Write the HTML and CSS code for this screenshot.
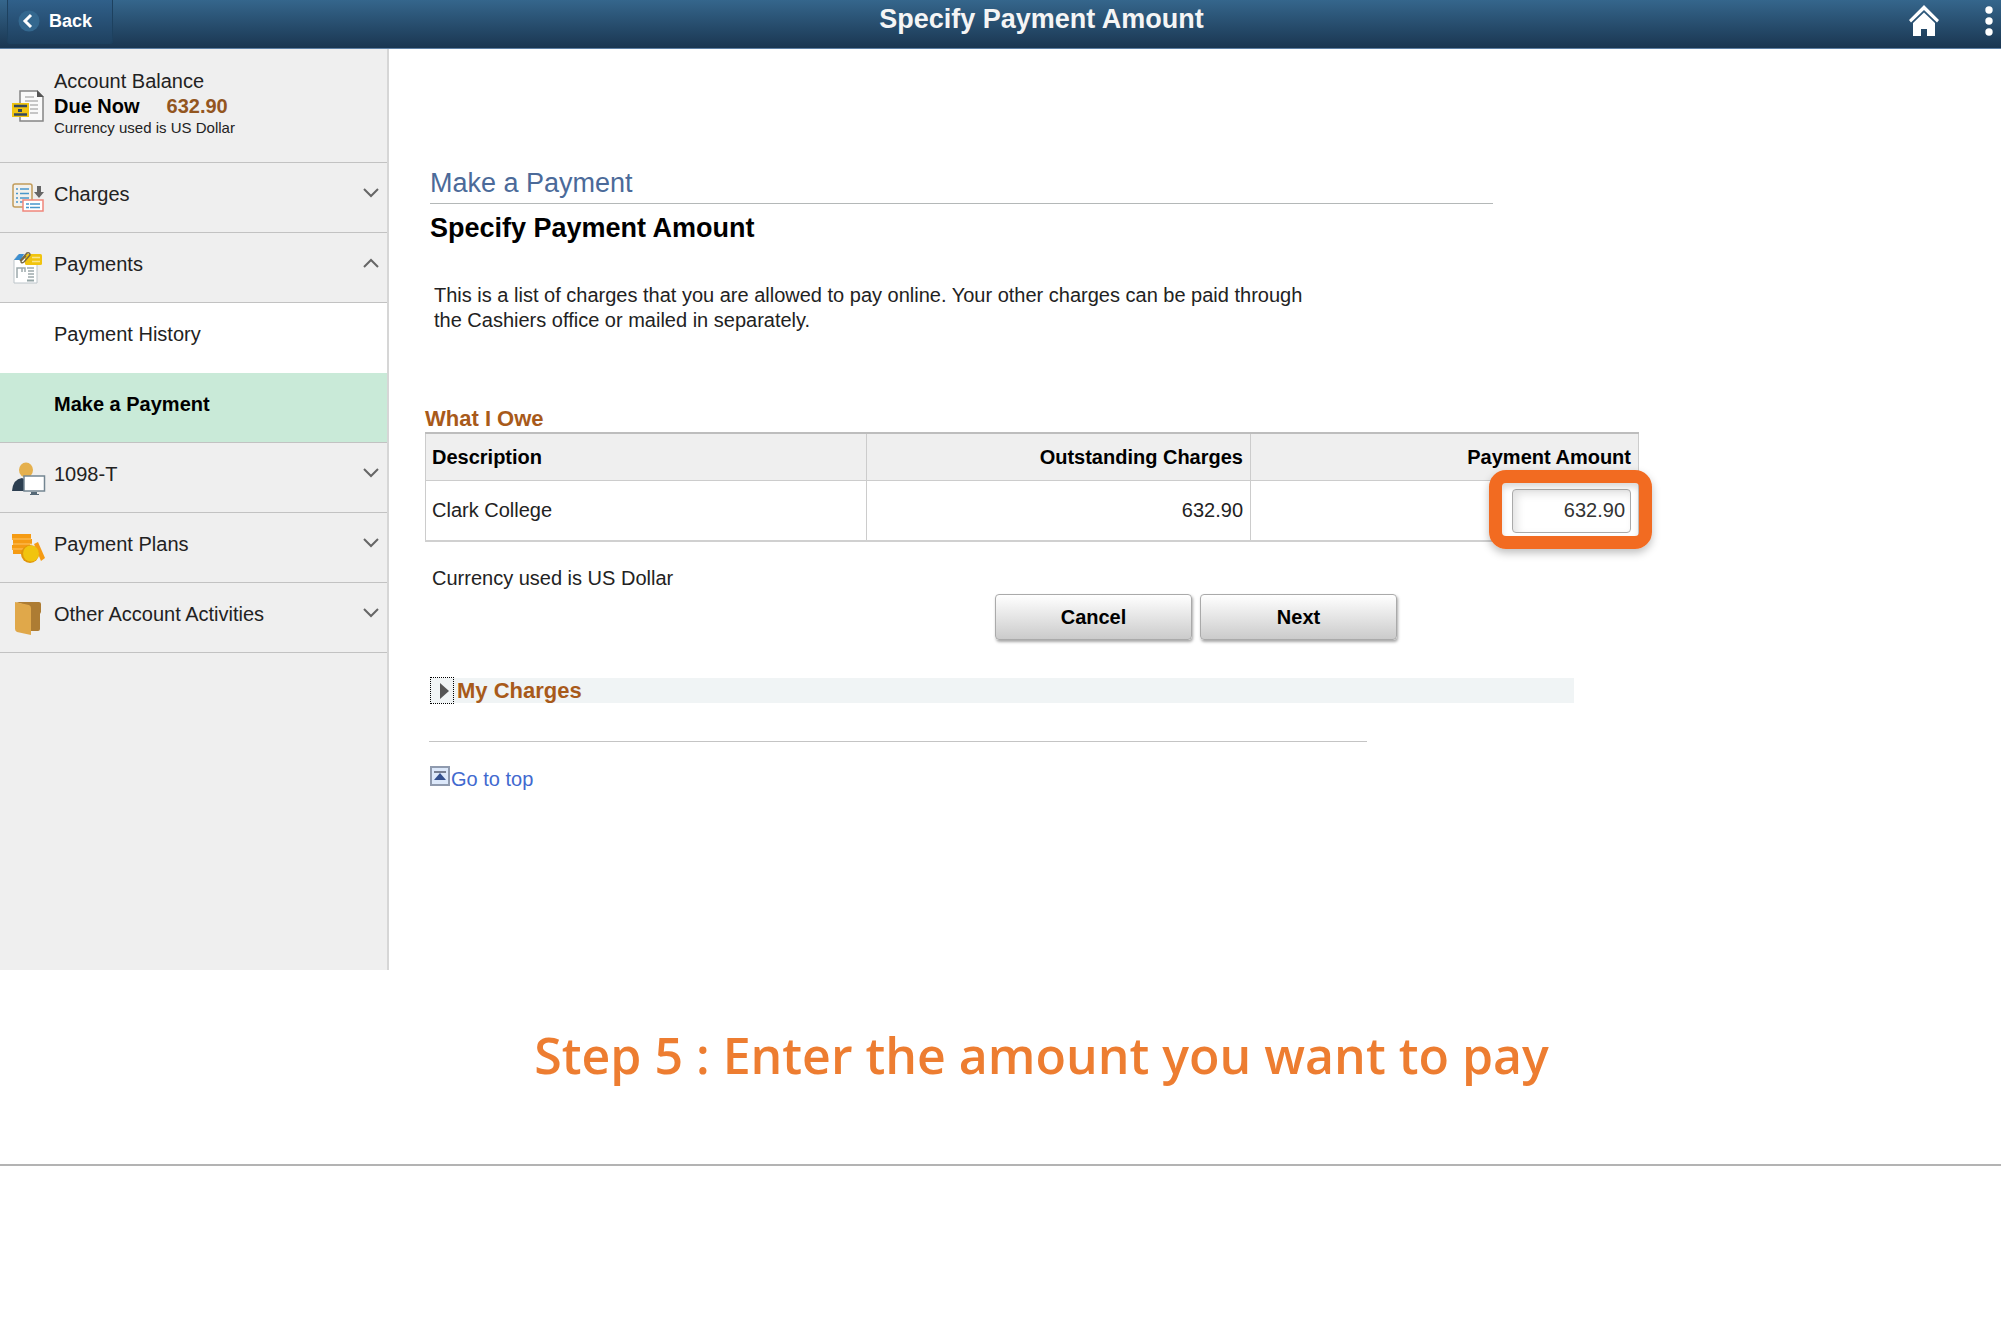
FILE: index.html
```html
<!DOCTYPE html>
<html lang="en">
<head>
    <meta charset="UTF-8">
    <meta name="viewport" content="width=device-width, initial-scale=1.0">
    <title>Specify Payment Amount</title>
    <link rel="stylesheet" href="styles.css">
</head>
<body>

    <header class="topbar">
        <button class="back" type="button">
            <svg width="22" height="22" viewBox="0 0 22 22"><circle cx="11" cy="11" r="10.5" fill="#34688f"/><path d="M13 5 L7 11 L13 17" fill="none" stroke="#fff" stroke-width="3"/></svg>
            Back
        </button>
        <h1>Specify Payment Amount</h1>
        <div class="actions">
            <button type="button" aria-label="Home">
                <svg width="32" height="34" viewBox="0 0 32 34" fill="#fff"><path d="M16 1 L31 16 L29 18.500 L16 6 L3 18.500 L1 16 Z"/><path d="M16 8.500 L27 19 V32 H19 V25 H13 V32 H5 V19 Z"/></svg>
            </button>
            <button type="button" aria-label="Actions">
                <svg width="10" height="34" viewBox="0 0 10 34" fill="#fff"><circle cx="5" cy="6" r="3.700"/><circle cx="5" cy="17" r="3.700"/><circle cx="5" cy="28" r="3.700"/></svg>
            </button>
        </div>
    </header>

    <div class="app">
        <nav class="sidebar">
            <div class="balance">
                <svg class="icon" width="34" height="34" viewBox="0 0 34 34">
                    <path d="M8 2 H25 L31 8 V32 H8 Z" fill="#fafafa" stroke="#858585" stroke-width="1.500"/>
                    <path d="M25 1 V8 H32 Z" fill="#555"/>
                    <path d="M13 8 H22 M13 12 H26 M18 16 H26 M18 20 H26 M18 24 H26" stroke="#b5b5b5" stroke-width="1.500"/>
                    <rect x="0" y="14" width="17" height="14" fill="#f1c40f"/>
                    <path d="M2 17 H15 M2 25.500 H15" stroke="#34495e" stroke-width="2.500"/>
                    <rect x="6" y="20" width="4" height="3" fill="#34495e"/>
                </svg>
                <div>
                    <div>Account Balance</div>
                    <div class="due"><b>Due Now</b><b class="amount">632.90</b></div>
                    <div class="small">Currency used is US Dollar</div>
                </div>
            </div>
            <button class="item" type="button">
                <svg class="icon" width="34" height="34" viewBox="0 0 34 34">
                    <rect x="1" y="2" width="19" height="23" rx="2" fill="#f3f1ec" stroke="#c29c5a" stroke-width="1.500"/>
                    <path d="M4 7 H6 M8 7 H17 M4 11.500 H6 M8 11.500 H17 M4 16 H6 M8 16 H17 M4 20 H6 M8 20 H11" stroke="#4a97cb" stroke-width="1.500"/>
                    <path d="M25 4 H29 V10 H32 L27 16 L22 10 H25 Z" fill="#666"/>
                    <rect x="11" y="18" width="20" height="11" fill="#fff" stroke="#f0867b" stroke-width="1.500"/>
                    <path d="M14 22 H17 M18 22 H28 M14 25.500 H17 M18 25.500 H28" stroke="#4a97cb" stroke-width="1.500"/>
                </svg>
                <span>Charges</span>
                <svg class="chevron" width="16" height="10" viewBox="0 0 16 10"><path d="M1 1 L8 8 L15 1"/></svg>
            </button>
            <button class="item" type="button">
                <svg class="icon" width="34" height="34" viewBox="0 0 34 34">
                    <path d="M2 8 L6 3 H25 V31 H2 Z" fill="#fff" stroke="#bdc5ca" stroke-width="1"/>
                    <path d="M2 8 L7 2 H12 L9 8 Z" fill="#3c8fd0"/>
                    <rect x="13" y="2" width="17" height="11" rx="1.500" fill="#f1c40f"/>
                    <path d="M20 5.500 H28 M20 9.500 H28" stroke="#fbe58a" stroke-width="1.500"/>
                    <path d="M8 9 L15 1 Q18 0 18 3 L12 10 Q9 12 9 9 L14 4" fill="none" stroke="#766845" stroke-width="1.500"/>
                    <path d="M5 26 V16 H13 V20 M10 20 V16 M15 16 H22 M16 19 H22 M16 22 H22 M16 25 H22" fill="none" stroke="#9da9ac" stroke-width="1.500"/>
                    <path d="M15 28.500 H22" stroke="#95a5a6" stroke-width="2"/>
                </svg>
                <span>Payments</span>
                <svg class="chevron" width="16" height="10" viewBox="0 0 16 10"><path d="M1 9 L8 2 L15 9"/></svg>
            </button>
            <a class="sub" href="#">Payment History</a>
            <a class="sub selected" href="#">Make a Payment</a>
            <button class="item" type="button">
                <svg class="icon" width="34" height="34" viewBox="0 0 34 34">
                    <ellipse cx="14" cy="8" rx="7" ry="7.500" fill="#e5b04d"/>
                    <path d="M0 29 Q1 17 10 16 L14 18 V29 Z" fill="#2c3e50"/>
                    <rect x="12" y="14" width="20.500" height="15" fill="#fff" stroke="#748692" stroke-width="1.500"/>
                    <path d="M19 30 H25 V32 H27 V33 H18 V32 H19 Z" fill="#566977"/>
                </svg>
                <span>1098-T</span>
                <svg class="chevron" width="16" height="10" viewBox="0 0 16 10"><path d="M1 1 L8 8 L15 1"/></svg>
            </button>
            <button class="item" type="button">
                <svg class="icon" width="34" height="34" viewBox="0 0 34 34">
                    <path d="M0 2 H19 V7 H20 V12 H18 V22 H1 V18 H0 V13 H1 V8 H0 Z" fill="#f59b13"/>
                    <path d="M0 7 H19 M1 12 H20 M0 17 H18" stroke="#ffc466" stroke-width="1"/>
                    <path d="M22 12 L26 10 L33 26 L29 29 Z" fill="#f59b13"/>
                    <circle cx="18" cy="22" r="9" fill="#e1960b"/>
                    <circle cx="19" cy="21.500" r="8" fill="#f1c40f"/>
                </svg>
                <span>Payment Plans</span>
                <svg class="chevron" width="16" height="10" viewBox="0 0 16 10"><path d="M1 1 L8 8 L15 1"/></svg>
            </button>
            <button class="item" type="button">
                <svg class="icon" width="34" height="34" viewBox="0 0 34 34">
                    <path d="M4 0 H27 Q29 0 29 2 V10 L28 12 V27 Q28 29 26 29 H16 V4 Z" fill="#ad7c33"/>
                    <path d="M3 0 L17 3 Q19 4 19 6 V33 L5 30 Q3 29 3 27 Z" fill="#e0a84a"/>
                </svg>
                <span>Other Account Activities</span>
                <svg class="chevron" width="16" height="10" viewBox="0 0 16 10"><path d="M1 1 L8 8 L15 1"/></svg>
            </button>
        </nav>

        <main class="content">
            <h2 class="section">Make a Payment</h2>
            <h3 class="page-title">Specify Payment Amount</h3>
            <p class="intro">This is a list of charges that you are allowed to pay online. Your other charges can be paid through the Cashiers office or mailed in separately.</p>

            <table class="owe">
                <caption>What I Owe</caption>
                <thead>
                    <tr>
                        <th>Description</th>
                        <th class="num">Outstanding Charges</th>
                        <th class="num" id="amountHead">Payment Amount</th>
                    </tr>
                </thead>
                <tbody>
                    <tr>
                        <td>Clark College</td>
                        <td class="num">632.90</td>
                        <td class="num"><span class="field"><input type="text" value="632.90" aria-labelledby="amountHead"></span></td>
                    </tr>
                </tbody>
            </table>
            <p class="currency">Currency used is US Dollar</p>

            <div class="buttons">
                <button type="button">Cancel</button>
                <button type="button">Next</button>
            </div>

            <div class="my-charges">
                <button type="button" aria-label="Expand My Charges">
                    <svg width="9" height="16" viewBox="0 0 9 16"><path d="M0 0 L9 8 L0 16 Z" fill="#555"/></svg>
                </button>
                <h4>My Charges</h4>
            </div>

            <hr class="divider">
            <a class="to-top" href="#">
                <svg width="20" height="20" viewBox="0 0 20 20"><rect x="1" y="1" width="18" height="18" fill="#dce8fa" stroke="#8f9aae" stroke-width="2"/><path d="M4 6 H16" stroke="#777f92" stroke-width="2"/><path d="M10 7 L16 14 H4 Z" fill="#34508f"/></svg>
                <span>Go to top</span>
            </a>
        </main>
    </div>

    <p class="step">Step 5 : Enter the amount you want to pay</p>
    <hr class="page-end">

</body>
</html>
```
FILE: styles.css
```css
body {
    margin: 0;
    background: #fff;
    color: #222;
    font-family: "Liberation Sans", Arial, sans-serif;
    font-size: 20px;
    line-height: 25px;
}

button {
    font-family: inherit;
    cursor: pointer;
}

h1, h2, h3, h4, p {
    margin: 0;
}

svg {
    display: block;
    flex: none;
}

/* Top bar */
.topbar {
    display: flex;
    align-items: flex-start;
    height: 48px;
    background: linear-gradient(#35668c, #1a3651);
    border-bottom: 1px solid #5d7fa3;
}

.back {
    display: flex;
    align-items: center;
    gap: 9px;
    width: 106px;
    height: 44px;
    margin-left: 7px;
    padding: 0 10px 1px;
    background: linear-gradient(#30608a, #1f4160);
    border: 1px solid #1d415f;
    border-top: none;
    border-radius: 0 0 3px 3px;
    color: #fff;
    font-size: 18px;
    font-weight: bold;
}

.topbar h1 {
    flex: 1;
    padding: 7px 0 0 62px;
    color: #f5f5f5;
    font-size: 27px;
    text-align: center;
}

.actions {
    display: flex;
    gap: 44px;
    padding: 4px 7px 0 0;
}

.actions button {
    padding: 0;
    background: none;
    border: none;
}

/* Sidebar */
.app {
    display: flex;
    min-height: 921px;
}

.sidebar {
    flex: none;
    box-sizing: border-box;
    width: 389px;
    background: #efefef;
    border-right: 2px solid #d6d6d6;
}

.balance {
    display: flex;
    gap: 8px;
    box-sizing: border-box;
    height: 114px;
    padding: 20px 12px 0;
    border-bottom: 1px solid #c2c2c2;
}

.balance .icon {
    margin-top: 20px;
}

.balance b {
    color: #000;
}

.balance .amount {
    margin-left: 27px;
    color: #93561f;
}

.small {
    font-size: 15px;
    line-height: 17px;
}

.item,
.sub {
    display: flex;
    align-items: flex-start;
    box-sizing: border-box;
    width: 100%;
    height: 70px;
    padding: 19px 8px 0 12px;
    color: #222;
    font-size: 20px;
    line-height: 24px;
    text-align: left;
    text-decoration: none;
}

.item {
    gap: 8px;
    background: none;
    border: none;
    border-bottom: 1px solid #c2c2c2;
}

.item span {
    flex: 1;
}

.chevron {
    margin-top: 6px;
    fill: none;
    stroke: #666;
    stroke-width: 2;
}

.sub {
    padding-left: 54px;
    background: #fff;
}

.sub.selected {
    background: #c9ead8;
    border-bottom: 1px solid #c2c2c2;
    color: #000;
    font-weight: bold;
}

/* Main content */
.content {
    flex: 1;
    max-width: 1214px;
    padding: 119px 36px 0;
}

.section {
    max-width: 1063px;
    margin-left: 5px;
    padding-bottom: 5px;
    border-bottom: 1px solid #b4b8b8;
    color: #4b6a99;
    font-size: 27px;
    font-weight: normal;
    line-height: 30px;
}

.page-title {
    margin: 9px 0 0 5px;
    color: #000;
    font-size: 27px;
    line-height: 30px;
}

.intro {
    max-width: 880px;
    margin: 40px 0 0 9px;
}

.owe {
    width: 100%;
    margin-top: 73px;
    border-collapse: collapse;
    table-layout: fixed;
}

.owe caption {
    padding-bottom: 1px;
    color: #a85a1a;
    font-size: 22px;
    font-weight: bold;
    text-align: left;
}

.owe th,
.owe td {
    padding: 0 7px 0 6px;
    border: 1px solid #ccc;
    text-align: left;
}

.owe th {
    height: 46px;
    border-top: 2px solid #bdbdbd;
    background: #efefef;
    color: #000;
}

.owe th:first-child {
    width: 427px;
}

.owe th:nth-child(2) {
    width: 370px;
}

.owe td {
    height: 59px;
    border-bottom: 2px solid #d0d0d0;
}

.owe .num {
    text-align: right;
}

.field {
    position: relative;
    display: inline-block;
    vertical-align: middle;
}

.field input {
    display: block;
    box-sizing: border-box;
    width: 119px;
    height: 44px;
    padding: 0 5px;
    background: #fff;
    border: 1px solid #aaa;
    border-radius: 4px;
    box-shadow: inset 4px 4px 8px #e2e2e2;
    color: #333;
    font: inherit;
    text-align: right;
}

/* Orange marker around the amount box */
.field::after {
    content: "";
    position: absolute;
    inset: -19px -21px -16px -23px;
    border: 13px solid #f26b21;
    border-radius: 17px;
    box-shadow: 0 4px 8px rgba(0, 0, 0, 0.25), inset 0 4px 6px rgba(0, 0, 0, 0.15);
    pointer-events: none;
}

.currency {
    margin: 24px 0 0 7px;
}

.buttons {
    display: flex;
    gap: 8px;
    margin: 3px 0 0 570px;
}

.buttons button {
    width: 197px;
    height: 46px;
    background: linear-gradient(#fff, #cbcbcb);
    border: 1px solid #aaa;
    border-radius: 4px;
    box-shadow: 1px 2px 3px rgba(0, 0, 0, 0.35);
    color: #000;
    font-size: 20px;
    font-weight: bold;
}

.my-charges {
    display: flex;
    align-items: center;
    gap: 3px;
    max-width: 1144px;
    height: 25px;
    margin: 38px 0 0 5px;
    background: #f0f4f5;
}

.my-charges button {
    flex: none;
    box-sizing: border-box;
    width: 24px;
    height: 27px;
    padding: 0 0 0 9px;
    background: none;
    border: 1px dotted #000;
}

.my-charges h4 {
    color: #a85a1a;
    font-size: 22px;
}

.divider {
    max-width: 938px;
    margin: 38px 0 0 4px;
    border: none;
    border-top: 1px solid #c4c4c4;
}

.to-top {
    display: inline-flex;
    gap: 1px;
    margin: 24px 0 0 5px;
    color: #4169cf;
    text-decoration: none;
}

.to-top span {
    padding-top: 1px;
}

/* Step caption */
.step {
    padding: 49px 0 73px 82px;
    color: #ed7d31;
    font-family: "Open Sans", "Noto Sans", sans-serif;
    font-size: 50px;
    font-weight: 600;
    line-height: 72px;
    text-align: center;
}

.page-end {
    margin: 0;
    border: none;
    border-top: 2px solid #b3b3b3;
}
```
